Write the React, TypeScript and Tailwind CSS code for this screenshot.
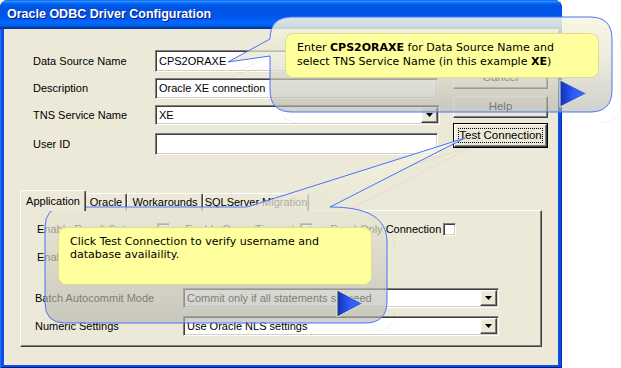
import React from "react";

const sunken =
  "bg-white border border-t-[#808080] border-l-[#808080] border-r-white border-b-white shadow-[inset_1px_1px_0_#404040,inset_-1px_-1px_0_#d4d0c8]";
const raised =
  "bg-[#ece9d8] border border-t-white border-l-white border-r-[#404040] border-b-[#404040] shadow-[inset_-1px_-1px_0_#808080,inset_1px_1px_0_#f1efe2]";

function Field({ value = "", h, w = "w-[283px]" }: { value?: string; h: string; w?: string }) {
  return (
    <div className={`${sunken} ${h} ${w} flex items-center pl-[3px] text-[11px] text-black whitespace-nowrap`}>{value}</div>
  );
}

function Arrow() {
  return (
    <div className={`${raised} w-[17px] h-full flex items-center justify-center`}>
      <svg width="7" height="4" viewBox="0 0 7 4">
        <path d="M0 0h7L3.5 4z" fill="#000" />
      </svg>
    </div>
  );
}

function Combo({ value, w, h }: { value: string; w: string; h: string }) {
  return (
    <div className={`${sunken} ${w} ${h} flex items-stretch p-[1px] text-[11px]`}>
      <div className="flex-1 flex items-center pl-[2px] text-black whitespace-nowrap">{value}</div>
      <Arrow />
    </div>
  );
}

function Button({ label, h, focus = false }: { label: string; h: string; focus?: boolean }) {
  if (focus) {
    return (
      <div className={`${h} w-[95px] border border-black`}>
        <div className={`${raised} h-full w-full flex items-center justify-center p-[3px]`}>
          <div className="h-full w-full border border-dotted border-black flex items-center justify-center text-[11.5px] whitespace-nowrap">
            {label}
          </div>
        </div>
      </div>
    );
  }
  return (
    <div className={`${raised} ${h} w-[95px] flex items-center justify-center text-[11.5px] text-black whitespace-nowrap`}>
      {label}
    </div>
  );
}

function Check({ checked = false }: { checked?: boolean }) {
  return (
    <div className={`${sunken} shrink-0 w-[13px] h-[13px] flex items-center justify-center`}>
      {checked && (
        <svg width="7" height="7" viewBox="0 0 7 7">
          <path d="M0 3l2 2 5-5v2L2 7 0 5z" fill="#000" />
        </svg>
      )}
    </div>
  );
}

function Tab({ label, active = false, w }: { label: string; active?: boolean; w: string }) {
  return (
    <div
      className={`${w} ${
        active ? "h-[21px] z-10 -mr-[1px]" : "h-[18px] mt-[3px]"
      } relative bg-[#ece9d8] border-t border-l border-white border-r border-r-[#404040] rounded-t-[2px] shadow-[inset_-1px_0_0_#808080] flex items-center justify-center text-[11px] text-black whitespace-nowrap`}
    >
      {label}
    </div>
  );
}

const P1 =
  "M292 17H590Q612 17 612 39V90Q612 112 590 112H292Q270 112 270 90V56L228 62L270 39Q270 17 292 17Z";
const P2 =
  "M65 207H247L465 138L330 207C368 207 387 218 387 242V301Q387 323 365 323H65Q45 323 45 303V227Q45 207 65 207Z";

function Callouts() {
  return (
    <svg className="absolute left-0 top-0 pointer-events-none" width="621" height="368" viewBox="0 0 621 368">
      <defs>
        <linearGradient id="fill1" x1="0" y1="0" x2="0" y2="1">
          <stop offset="0" stopColor="#f8f7e2" stopOpacity="0.88" />
          <stop offset="0.45" stopColor="#e4e3d0" stopOpacity="0.7" />
          <stop offset="1" stopColor="#b4b4ae" stopOpacity="0.62" />
        </linearGradient>
        <linearGradient id="tri" x1="0" y1="0" x2="1" y2="0">
          <stop offset="0" stopColor="#1030b8" />
          <stop offset="0.5" stopColor="#2e5cf6" />
          <stop offset="1" stopColor="#3d6cff" />
        </linearGradient>
        <mask id="m1">
          <rect width="621" height="368" fill="white" />
          <path d={P1} fill="black" />
        </mask>
        <mask id="m2">
          <rect width="621" height="368" fill="white" />
          <path d={P2} fill="black" />
        </mask>
      </defs>

      <path d={P1} transform="translate(9 11)" fill="#6e6e6e" fillOpacity="0.45" mask="url(#m1)" />
      <path d={P1} fill="url(#fill1)" stroke="#4673ff" strokeWidth="1" />
      <rect x="285.5" y="33.5" width="313" height="44" rx="8" fill="#ffff9e" stroke="#dedc90" />
      <path d="M560 80L587 93.5L560 107Z" fill="url(#tri)" stroke="#eeeaa0" strokeWidth="1" />

      <path d={P2} transform="translate(8 8)" fill="#6e6e6e" fillOpacity="0.45" mask="url(#m2)" />
      <path d={P2} fill="url(#fill1)" stroke="#4673ff" strokeWidth="1" />
      <rect x="58.5" y="227.5" width="313" height="57" rx="8" fill="#ffff9e" stroke="#dedc90" />
      <path d="M337 290L363 303.5L337 317Z" fill="url(#tri)" stroke="#eeeaa0" strokeWidth="1" />
    </svg>
  );
}

export default function App() {
  return (
    <div className="relative w-[621px] h-[368px] bg-white overflow-hidden font-['Liberation_Sans',Arial,sans-serif]">
      <div className="w-[562px] h-[368px] flex flex-col rounded-t-[8px] bg-[#0b4ee4] px-[4px] pb-[3px] shadow-[inset_1px_0_0_#2a6cf5,inset_-1px_0_0_#0030b0,inset_0_-1px_0_#001c9a]">
        {/* title bar */}
        <div className="h-[29px] -mx-[4px] px-[7px] rounded-t-[8px] flex items-center bg-[linear-gradient(180deg,#0058ee_0%,#3593ff_4%,#288eff_6%,#127dff_8%,#036ffc_10%,#0262ee_14%,#0057e5_20%,#0054e3_24%,#0055eb_56%,#005bf5_66%,#026afe_76%,#0062ef_86%,#0052d6_92%,#0040ab_94%,#003092_100%)]">
          <span className="text-white font-bold text-[12.5px] [text-shadow:1px_1px_0_#0a1a7a]">
            Oracle ODBC Driver Configuration
          </span>
        </div>

        {/* dialog body */}
        <div className="flex-1 bg-[#ece9d8] flex flex-col text-[11px] text-black">
          <div className="flex items-start pt-[11px]">
            <div className="ml-[29px] mt-[10px] w-[407px] flex flex-col">
              <div className="flex items-center h-[22px]">
                <div className="w-[122px]">Data Source Name</div>
                <Field value="CPS2ORAXE" h="h-[22px]" />
              </div>
              <div className="flex items-center h-[21px] mt-[6px]">
                <div className="w-[122px]">Description</div>
                <Field value="Oracle XE connection" h="h-[21px]" />
              </div>
              <div className="flex items-center h-[20px] mt-[6px]">
                <div className="w-[122px]">TNS Service Name</div>
                <Combo value="XE" w="w-[285px]" h="h-[20px]" />
              </div>
              <div className="flex items-center h-[22px] mt-[8px]">
                <div className="w-[122px]">User ID</div>
                <Field h="h-[22px]" />
              </div>
            </div>
            <div className="ml-[13px] flex flex-col">
              <Button label="OK" h="h-[23px]" />
              <div className="mt-[4px]">
                <Button label="Cancel" h="h-[22px]" />
              </div>
              <div className="mt-[7px]">
                <Button label="Help" h="h-[22px]" />
              </div>
              <div className="mt-[5px]">
                <Button label="Test Connection" h="h-[25px]" focus />
              </div>
            </div>
          </div>

          {/* tabs */}
          <div className="ml-[16px] mt-[35px] flex items-start">
            <Tab label="Application" w="w-[66px]" active />
            <Tab label="Oracle" w="w-[42px]" />
            <Tab label="Workarounds" w="w-[76px]" />
            <Tab label="SQLServer Migration" w="w-[106px]" />
          </div>
          <div className="ml-[16px] -mt-[1px] w-[522px] h-[137px] border-t border-l border-white border-r border-b border-r-[#404040] border-b-[#404040] shadow-[inset_-1px_-1px_0_#808080] flex flex-col whitespace-nowrap">
            <div className="flex items-center h-[13px] mt-[12px] pl-[16px]">
              <div className="w-[120px]">Enable Result Sets</div>
              <Check checked />
              <div className="w-[130px] pl-[15px]">Enable Query Timeout</div>
              <Check checked />
              <div className="w-[130px] pl-[17px]">Read-Only Connection</div>
              <Check />
            </div>
            <div className="flex items-center h-[13px] mt-[15px] pl-[16px]">
              <div className="w-[120px]">Enable Closing Cursors</div>
              <Check />
              <div className="w-[130px] pl-[15px]">Enable Thread Safety</div>
              <Check checked />
            </div>
            <div className="flex items-center h-[20px] mt-[24px] pl-[14px]">
              <div className="w-[148px]">Batch Autocommit Mode</div>
              <Combo value="Commit only if all statements succeed" w="w-[316px]" h="h-[20px]" />
            </div>
            <div className="flex items-center h-[20px] mt-[8px] pl-[14px]">
              <div className="w-[148px]">Numeric Settings</div>
              <Combo value="Use Oracle NLS settings" w="w-[316px]" h="h-[20px]" />
            </div>
          </div>
        </div>
      </div>

      <Callouts />

      <div className="absolute left-[297px] top-[41px] text-[11px] leading-[14px] text-black whitespace-nowrap font-['DejaVu_Sans',Verdana,sans-serif]">
        <div>
          Enter <b>CPS2ORAXE</b> for Data Source Name and
        </div>
        <div>
          select TNS Service Name (in this example <b>XE</b>)
        </div>
      </div>
      <div className="absolute left-[70px] top-[235px] text-[11px] leading-[13px] text-black whitespace-nowrap font-['DejaVu_Sans',Verdana,sans-serif]">
        <div>Click Test Connection to verify username and</div>
        <div>database availaility.</div>
      </div>
    </div>
  );
}
